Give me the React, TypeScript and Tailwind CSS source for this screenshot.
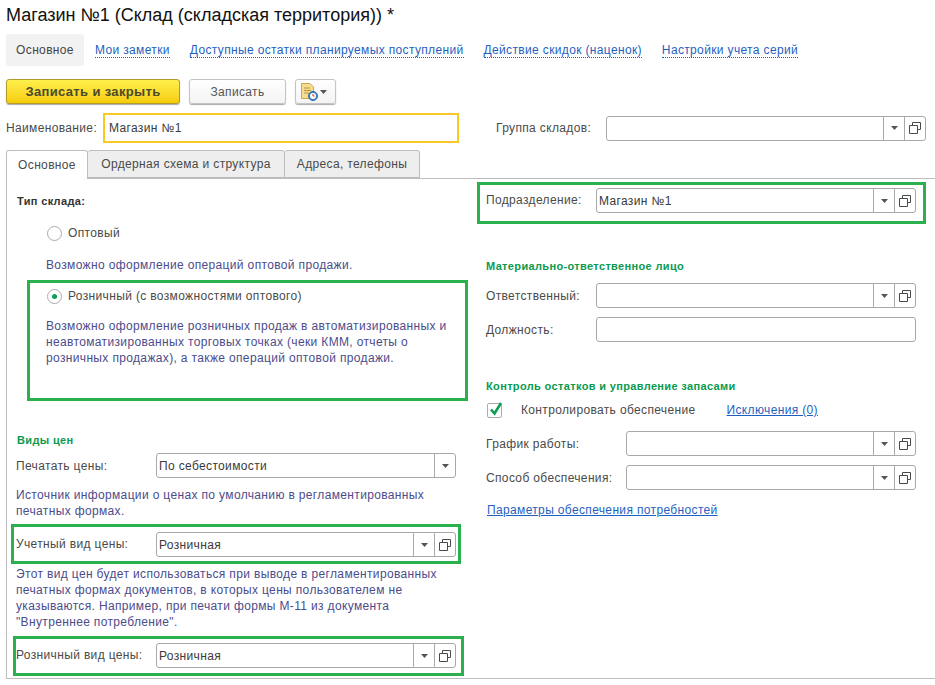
import React from "react";

function OpenIcon() {
  return (
    <svg width="12" height="12" viewBox="0 0 12 12" fill="none" stroke="#4a4a4a" strokeWidth="1">
      <path d="M3.5 3.5V0.5H11.5V7.5H8.5" />
      <path d="M0.5 3.5H8.5V11.5H0.5Z" />
    </svg>
  );
}

function Arrow() {
  return (
    <svg width="7" height="4" viewBox="0 0 7 4" fill="#555">
      <path d="M0 0H7L3.5 4Z" />
    </svg>
  );
}

function Field({ value, width, open = true }: { value?: string; width: string; open?: boolean }) {
  return (
    <div className={`flex h-[25px] items-stretch rounded-[3px] border border-[#a9a9a9] bg-white ${width}`}>
      <div className="flex min-w-0 flex-1 items-center pl-[2px] text-[#3a3a3a]">{value}</div>
      <div className="flex w-[21px] items-center justify-center border-l border-[#a9a9a9]">
        <Arrow />
      </div>
      {open && (
        <div className="flex w-[21px] items-center justify-center border-l border-[#a9a9a9]">
          <OpenIcon />
        </div>
      )}
    </div>
  );
}

function PlainField({ width }: { width: string }) {
  return <div className={`h-[25px] rounded-[3px] border border-[#a9a9a9] bg-white ${width}`} />;
}

function Radio({ checked }: { checked?: boolean }) {
  return (
    <span className="flex h-[15px] w-[15px] shrink-0 items-center justify-center rounded-full border border-[#ababab] bg-white">
      {checked && <span className="h-[5px] w-[5px] rounded-full bg-[#0f9d58]" />}
    </span>
  );
}

function Section({ children }: { children: React.ReactNode }) {
  return <div className="h-[16px] text-[11px] leading-[16px] font-bold text-[#0a9a50]">{children}</div>;
}

function Desc({ children, className = "" }: { children: React.ReactNode; className?: string }) {
  return <div className={`leading-[16px] text-[#4c4c8c] ${className}`}>{children}</div>;
}

function NavLink({ children }: { children: React.ReactNode }) {
  return (
    <span className="border-b border-dotted border-[#1f5fbf] leading-[14px] text-[#1f5fbf]">{children}</span>
  );
}

function DocClockIcon() {
  return (
    <svg width="17" height="18" viewBox="0 0 17 18">
      <path d="M0.5 0.5H9L12.5 4V15.5H0.5Z" fill="#f6dc8c" stroke="#c9a94e" />
      <path d="M3 5H9M3 7.5H10M3 10H8" stroke="#b39445" strokeWidth="1" />
      <circle cx="12" cy="13" r="4.5" fill="#3f86c9" stroke="#2d6ba8" />
      <circle cx="12" cy="13" r="3" fill="#fff" />
      <path d="M12 11V13H13.5" stroke="#c0392b" strokeWidth="1" fill="none" />
    </svg>
  );
}

export default function App() {
  return (
    <div className="h-[685px] w-[935px] overflow-hidden bg-white font-['Liberation_Sans',Arial,sans-serif] text-[12px] tracking-[0.35px] text-[#4a4a4a]">
      <div className="h-[34px] pt-[3px] pl-[6px] text-[18px] leading-[24px] tracking-normal text-[#111]">
        Магазин №1 (Склад (складская территория)) *
      </div>

      <div className="flex h-[32px] items-center pl-[6px]">
        <div className="flex h-[32px] w-[78px] items-center justify-center rounded-[3px] bg-[#f2f2f2] text-[#444]">
          Основное
        </div>
        <div className="ml-[11px] flex gap-[20px]">
          <NavLink>Мои заметки</NavLink>
          <NavLink>Доступные остатки планируемых поступлений</NavLink>
          <NavLink>Действие скидок (наценок)</NavLink>
          <NavLink>Настройки учета серий</NavLink>
        </div>
      </div>

      <div className="mt-[13px] flex h-[25px] pl-[6px]">
        <div className="flex w-[174px] items-center justify-center rounded-[3px] border border-[#b49a2a] bg-gradient-to-b from-[#fff04a] to-[#f5cc00] text-[13px] font-bold text-[#4a4a2a] shadow-[0_1px_1px_#aaa]">
          Записать и закрыть
        </div>
        <div className="ml-[9px] flex w-[97px] items-center justify-center rounded-[3px] border border-[#c4c4c4] bg-gradient-to-b from-white to-[#f3f3f3] text-[#555] shadow-[0_1px_1px_#aaa]">
          Записать
        </div>
        <div className="ml-[9px] flex w-[41px] items-center justify-between rounded-[3px] border border-[#c4c4c4] bg-gradient-to-b from-white to-[#f3f3f3] pr-[8px] pl-[5px] shadow-[0_1px_1px_#aaa]">
          <DocClockIcon />
          <Arrow />
        </div>
      </div>

      <div className="mt-[9px] flex h-[30px] items-center pl-[6px]">
        <div className="w-[97px]">Наименование:</div>
        <div className="flex h-[30px] w-[356px] items-center border-2 border-[#fbc926] pl-[4px] text-[#3a3a3a]">
          Магазин №1
        </div>
        <div className="ml-[37px] w-[110px]">Группа складов:</div>
        <Field width="w-[320px]" />
      </div>

      <div className="mt-[7px] ml-[6px] flex h-[28px]">
        <div className="z-10 flex h-[29px] w-[82px] items-center justify-center rounded-t-[3px] border border-b-0 border-[#bdbdbd] bg-white">
          Основное
        </div>
        <div className="flex w-[197px] items-center justify-center rounded-t-[3px] border border-l-0 border-[#bdbdbd] bg-[#eeeeee]">
          Ордерная схема и структура
        </div>
        <div className="flex w-[135px] items-center justify-center rounded-t-[3px] border border-l-0 border-[#bdbdbd] bg-[#eeeeee]">
          Адреса, телефоны
        </div>
      </div>

      <div className="ml-[6px] flex h-[501px] border-t border-b border-l border-[#bdbdbd]">
        <div className="w-[463px] shrink-0">
          <div className="mt-[14px] ml-[10px] h-[16px] text-[11px] leading-[16px] font-bold text-[#333]">Тип склада:</div>
          <div className="mt-[16px] ml-[40px] flex h-[16px] items-center gap-[6px]">
            <Radio />
            <span>Оптовый</span>
          </div>
          <Desc className="mt-[16px] ml-[39px]">Возможно оформление операций оптовой продажи.</Desc>
          <div className="mt-[7px] ml-[20px] h-[121px] w-[441px] border-[3px] border-[#2bb04e] pt-[5px]">
            <div className="ml-[17px] flex h-[16px] items-center gap-[6px]">
              <Radio checked />
              <span>Розничный (с возможностями оптового)</span>
            </div>
            <Desc className="mt-[14px] ml-[16px] w-[420px]">
              Возможно оформление розничных продаж в автоматизированных и неавтоматизированных торговых точках (чеки
              КММ, отчеты о розничных продажах), а также операций оптовой продажи.
            </Desc>
          </div>
          <div className="mt-[31px] ml-[10px]">
            <Section>Виды цен</Section>
          </div>
          <div className="mt-[5px] ml-[9px] flex items-center">
            <div className="w-[140px]">Печатать цены:</div>
            <Field value="По себестоимости" width="w-[300px]" open={false} />
          </div>
          <Desc className="mt-[9px] ml-[9px] w-[440px]">
            Источник информации о ценах по умолчанию в регламентированных печатных формах.
          </Desc>
          <div className="mt-[5px] ml-[4px] flex h-[40px] w-[450px] items-start border-[3px] border-[#2bb04e] pt-[5px] pl-[2px]">
            <div className="h-[25px] w-[140px] leading-[25px]">Учетный вид цены:</div>
            <Field value="Розничная" width="w-[300px]" />
          </div>
          <Desc className="mt-[2px] ml-[9px] w-[450px]">
            Этот вид цен будет использоваться при выводе в регламентированных печатных формах документов, в которых цены
            пользователем не указываются. Например, при печати формы М-11 из документа "Внутреннее потребление".
          </Desc>
          <div className="mt-[6px] ml-[6px] flex h-[40px] w-[451px] items-start border-[3px] border-[#2bb04e] pt-[4px]">
            <div className="h-[25px] w-[140px] leading-[25px]">Розничный вид цены:</div>
            <Field value="Розничная" width="w-[300px]" />
          </div>
        </div>

        <div className="ml-[7px] flex-1">
          <div className="mt-[3px] flex h-[42px] w-[449px] items-start border-[3px] border-[#2bb04e] pt-[3px] pl-[6px]">
            <div className="h-[25px] w-[110px] leading-[25px]">Подразделение:</div>
            <Field value="Магазин №1" width="w-[320px]" />
          </div>
          <div className="mt-[34px] ml-[9px]">
            <Section>Материально-ответственное лицо</Section>
          </div>
          <div className="mt-[9px] ml-[9px] flex items-center">
            <div className="w-[110px]">Ответственный:</div>
            <Field width="w-[320px]" />
          </div>
          <div className="mt-[9px] ml-[9px] flex items-center">
            <div className="w-[110px]">Должность:</div>
            <PlainField width="w-[320px]" />
          </div>
          <div className="mt-[36px] ml-[9px]">
            <Section>Контроль остатков и управление запасами</Section>
          </div>
          <div className="mt-[8px] ml-[10px] flex h-[16px] items-center">
            <span className="relative block h-[15px] w-[15px] shrink-0 rounded-[2px] border border-[#ababab] bg-white">
              <svg className="absolute -top-[3px] left-[1px]" width="14" height="15" viewBox="0 0 14 15" fill="none">
                <path d="M2 8.5L5.5 12.5L12 2" stroke="#0f9d58" strokeWidth="2.6" />
              </svg>
            </span>
            <span className="ml-[19px]">Контролировать обеспечение</span>
            <span className="ml-[31px] text-[#1f5fbf] underline">Исключения (0)</span>
          </div>
          <div className="mt-[13px] ml-[9px] flex items-center">
            <div className="w-[140px]">График работы:</div>
            <Field width="w-[290px]" />
          </div>
          <div className="mt-[9px] ml-[9px] flex items-center">
            <div className="w-[140px]">Способ обеспечения:</div>
            <Field width="w-[290px]" />
          </div>
          <div className="mt-[12px] ml-[10px] h-[16px] leading-[16px] text-[#1f5fbf] underline">
            Параметры обеспечения потребностей
          </div>
        </div>
      </div>
    </div>
  );
}
